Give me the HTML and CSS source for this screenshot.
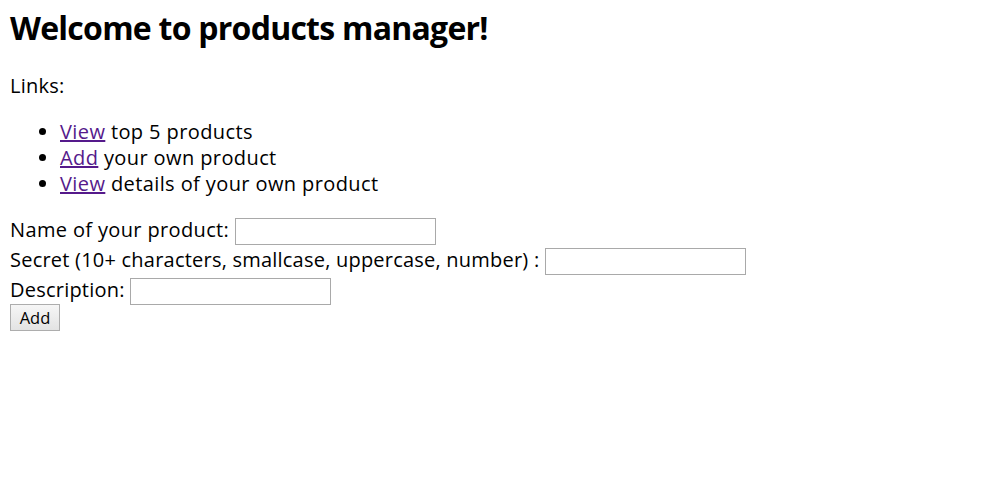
FILE: index.html
```html
<!DOCTYPE html>
<html lang="en">
<head>
<meta charset="utf-8">
<title>Products manager</title>
<link rel="stylesheet" href="styles.css">
</head>
<body>
<h1 class="title">Welcome to products manager!</h1>
<p class="intro">Links:</p>
<ul class="links">
  <li><a class="link" href="#top">View</a> top 5 products</li>
  <li><a class="link" href="#add">Add</a> your own product</li>
  <li><a class="link" href="#details">View</a> details of your own product</li>
</ul>
<form class="product-form" action="#">
  <div class="row name-row">Name of your product: <input class="field" type="text" name="name"></div>
  <div class="row">Secret (10+ characters, smallcase, uppercase, number) : <input class="field" type="text" name="secret"></div>
  <div class="row">Description: <input class="field" type="text" name="description"></div>
  <div class="row-btn"><button class="btn" type="submit">Add</button></div>
</form>
</body>
</html>
```
FILE: styles.css
```css
html, body {
  background: #ffffff;
}
body {
  margin: 8px 10px;
  font-family: "Open Sans", "Noto Sans", sans-serif;
  font-size: 20px;
  letter-spacing: 0.22px;
  color: #000000;
}
.title {
  margin: 0;
  font-size: 32px;
  line-height: 40px;
  font-weight: 700;
  letter-spacing: -0.75px;
}
.intro {
  margin: 25px 0 0;
  line-height: 26px;
}
.links {
  margin: 20px 0 0;
  padding-left: 50px;
  line-height: 26px;
  letter-spacing: 0.4px;
}
.link {
  color: #551a8b;
  text-decoration: underline;
}
.product-form {
  margin-top: 18px;
}
.row {
  height: 30px;
  line-height: 30px;
  white-space: nowrap;
}
.name-row {
  letter-spacing: 0.36px;
}
.field {
  box-sizing: border-box;
  width: 201px;
  height: 27px;
  border: 1px solid #a9a9a9;
  padding: 0 2px;
  margin: 0;
  vertical-align: middle;
  background: #ffffff;
  font: inherit;
}
.row-btn {
  display: flex;
  margin-top: -1px;
}
.btn {
  box-sizing: border-box;
  width: 50px;
  height: 27px;
  margin: 0;
  padding: 0;
  border: 1px solid #adadad;
  background: linear-gradient(#f6f6f6, #e3e3e3);
  font-family: "Open Sans", "Noto Sans", sans-serif;
  font-size: 16.5px;
  letter-spacing: 0;
  color: #000000;
}
```
